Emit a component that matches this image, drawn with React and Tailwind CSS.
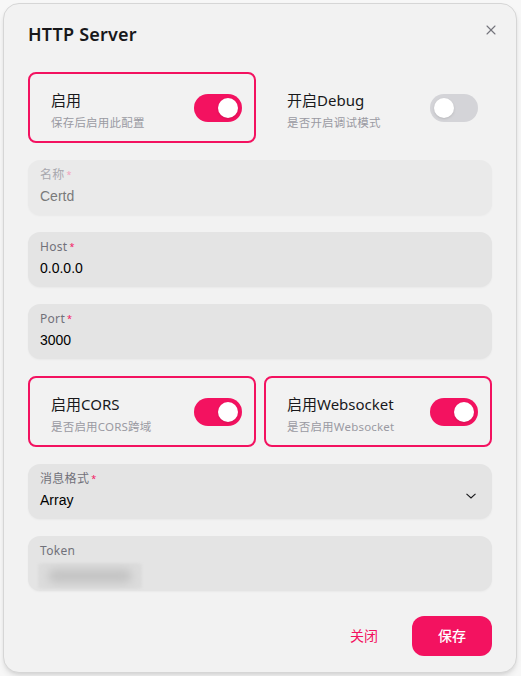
import { X } from 'lucide-react';

const font = { fontFamily: '"Noto Sans", "Noto Sans CJK SC", sans-serif' };

function Toggle({ on }) {
  return (
    <div className={`w-12 h-7 rounded-full flex items-center px-1 flex-shrink-0 ${on ? 'bg-[#f31260] justify-end' : 'bg-[#d4d4d8] justify-start'}`}>
      <div className="w-5 h-5 rounded-full bg-white shadow-sm" />
    </div>
  );
}

function SwitchCard({ title, desc, on, bordered }) {
  return (
    <div className={`flex-1 h-[71px] rounded-lg border-2 flex items-center justify-between pl-[21px] pr-3 ${bordered ? 'border-[#f31260]' : 'border-transparent'}`}>
      <div className="flex flex-col pt-[5px]">
        <span className="text-[15px] leading-5 text-[#18181b]">{title}</span>
        <span className="text-[11.5px] leading-4 mt-[5px] tracking-[0.2px] text-[#9a9aa2]">{desc}</span>
      </div>
      <Toggle on={on} />
    </div>
  );
}

function Field({ label, value, disabled, required = true, select, children }) {
  return (
    <div className={`h-[55px] rounded-xl px-3 pt-[7px] flex items-start justify-between shadow-[0_1px_2px_rgba(0,0,0,0.04)] ${disabled ? 'bg-[#eaeaea]' : 'bg-[#e4e4e4]'}`}>
      <div className="flex flex-col">
        <span className={`text-xs leading-4 tracking-[0.3px] ${disabled ? 'text-[#a8a8ae]' : 'text-[#71717a]'}`}>
          {label}
          {required && <span className={`text-[9px] align-top ml-[2px] ${disabled ? 'text-[#f3a0bd]' : 'text-[#f31260]'}`}>*</span>}
        </span>
        {children || (
          <span className={`text-sm leading-5 mt-[3px] ${disabled ? 'text-[#7a7a7a]' : 'text-black'}`} style={{ fontFamily: '"Liberation Sans", Arial, sans-serif' }}>{value}</span>
        )}
      </div>
      {select && (
        <svg width="12" height="8" viewBox="0 0 12 8" className="mt-[21px] mr-[3px]">
          <path d="M1.5 1.8 L6 6 L10.5 1.8" fill="none" stroke="#18181b" strokeWidth="1.1" />
        </svg>
      )}
    </div>
  );
}

export default function App() {
  return (
    <div className="min-h-[676px] bg-[#f7f7f7] p-[3px]" style={font}>
      <div className="w-[514px] h-[670px] bg-[#f2f2f2] border border-[#d6d6d6] rounded-2xl shadow-md px-6 pt-4 relative">
        <button className="absolute right-[13px] top-[14px] text-[#74747c] p-1">
          <X size={16} strokeWidth={1.6} />
        </button>
        <h1 className="text-[18px] leading-7 font-semibold tracking-[0.2px] text-[#18181b]">HTTP Server</h1>

        <div className="mt-6 flex flex-col gap-[17px]">
          <div className="flex gap-2">
            <SwitchCard title="启用" desc="保存后启用此配置" on bordered />
            <SwitchCard title="开启Debug" desc="是否开启调试模式" />
          </div>
          <Field label="名称" value="Certd" disabled />
          <Field label="Host" value="0.0.0.0" />
          <Field label="Port" value="3000" />
          <div className="flex gap-2">
            <SwitchCard title="启用CORS" desc="是否启用CORS跨域" on bordered />
            <SwitchCard title="启用Websocket" desc="是否启用Websocket" on bordered />
          </div>
          <Field label="消息格式" value="Array" select />
          <Field label="Token" required={false}>
            <span className="mt-[4px] -ml-[2px] w-[104px] h-[26px] bg-[#dcdcdc] rounded-sm flex items-center justify-center overflow-hidden blur-[1px]">
              <span className="w-[84px] h-[14px] bg-[#c4c4c4] rounded-full blur-[4px]" />
            </span>
          </Field>
        </div>

        <div className="mt-[25px] flex justify-end gap-2">
          <button className="w-20 h-10 rounded-xl text-sm text-[#f31260]">关闭</button>
          <button className="w-20 h-10 rounded-xl text-sm text-white bg-[#f31260] font-medium">保存</button>
        </div>
      </div>
    </div>
  );
}
